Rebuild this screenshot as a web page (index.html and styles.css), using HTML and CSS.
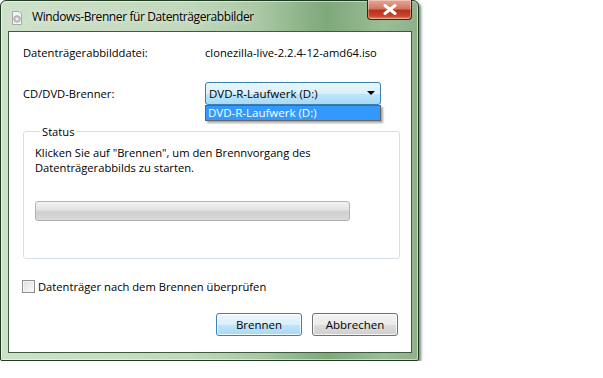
FILE: index.html
```html
<!DOCTYPE html>
<html>
<head>
  <title>Windows-Brenner</title>
  <meta charset="utf-8">
  <link rel="stylesheet" href="styles.css">
</head>
<body>
  <div class="window">
    <div class="titlebar">
      <svg class="app-icon" width="12" height="14" viewBox="0 0 12 14">
        <path d="M1.5 0.5 H8 L10.5 3 V13.5 H1.5 Z" fill="#f4f4f4" stroke="#a8a8a8"/>
        <circle cx="6" cy="8" r="3.3" fill="#c9c9c9" stroke="#9a9a9a" stroke-width="0.8"/>
        <circle cx="6" cy="8" r="1" fill="#fff"/>
      </svg>
      <span class="title">Windows-Brenner für Datenträgerabbilder</span>
      <a href="#" class="close">
        <svg width="14" height="11" viewBox="0 0 14 11"><path d="M2 1.5 L12 9.5 M12 1.5 L2 9.5" stroke="#fff" stroke-width="3" stroke-linecap="round"/></svg>
      </a>
    </div>
    <div class="client">
      <div class="row">
        <span class="label">Datenträgerabbilddatei:</span>
        <span class="value">clonezilla-live-2.2.4-12-amd64.iso</span>
      </div>
      <div class="row row-combo">
        <span class="label">CD/DVD-Brenner:</span>
        <div class="combo-wrap">
          <div class="combo">
            <span>DVD-R-Laufwerk (D:)</span>
            <span class="arrow"></span>
          </div>
          <div class="droplist">
            <div class="item">DVD-R-Laufwerk (D:)</div>
          </div>
        </div>
      </div>
      <fieldset class="group">
        <legend>Status</legend>
        <p>Klicken Sie auf "Brennen", um den Brennvorgang des<br>Datenträgerabbilds zu starten.</p>
        <div class="progress"></div>
      </fieldset>
      <label class="check"><span class="box"></span>Datenträger nach dem Brennen überprüfen</label>
      <div class="buttons">
        <a href="#" class="btn default">Brennen</a>
        <a href="#" class="btn">Abbrechen</a>
      </div>
    </div>
  </div>
</body>
</html>
```
FILE: styles.css
```css
*{
  padding:0;
  margin:0;
  box-sizing:border-box;
}
body{
  background:#fff;
  font-family:"Open Sans","Noto Sans",sans-serif;
  font-size:11.2px;
  color:#000;
}
a{
  text-decoration:none;
  color:#000;
}
.window{
  width:419px;
  height:361px;
  border:1px solid #1e3a20;
  border-radius:6px 6px 2px 2px;
  background:linear-gradient(to right,#cfe1ca 0%,#c1d8bb 45%,#a9c8a4 62%,#7ea87a 78%,#9bbd96 92%,#8fb08b 100%);
  box-shadow:inset 0 0 0 1px rgba(255,255,255,0.5),2px 2px 3px rgba(0,0,0,0.5);
  display:flex;
  flex-direction:column;
  padding:0 6px 7px 7px;
}
.titlebar{
  height:30px;
  display:flex;
  align-items:flex-start;
  position:relative;
}
.app-icon{
  margin:10px 9px 0 3px;
}
.title{
  margin-top:7px;
  font-size:12px;
  letter-spacing:-0.4px;
  color:#000;
  text-shadow:0 0 6px #fff;
}
.close{
  position:absolute;
  top:-1px;
  right:0;
  width:45px;
  height:20px;
  border:1px solid #4a1a12;
  border-top:none;
  border-radius:0 0 4px 4px;
  background:linear-gradient(#e6a696 0%,#d47763 45%,#b8321c 55%,#c9472d 85%,#e28d6e 100%);
  box-shadow:inset 0 0 0 1px rgba(255,255,255,0.35);
  display:flex;
  align-items:center;
  justify-content:center;
}
.client{
  flex:1;
  background:#fff;
  border:1px solid #3d5a3e;
  padding:9px 13px 0 14px;
  display:flex;
  flex-direction:column;
}
.row{
  display:flex;
  align-items:center;
  height:22px;
}
.label{
  width:182px;
}
.row-combo{
  margin-top:19px;
}
.combo-wrap{
  position:relative;
}
.combo{
  width:176px;
  height:23px;
  border:1px solid #3c7fb1;
  border-radius:3px;
  background:linear-gradient(#eaf6fd 0%,#d9f0fc 50%,#bee6fd 51%,#a7d9f5 100%);
  display:flex;
  align-items:center;
  justify-content:space-between;
  padding:0 5px 0 3px;
  font-size:11.5px;
}
.arrow{
  width:0;
  height:0;
  border-left:4px solid transparent;
  border-right:4px solid transparent;
  border-top:4px solid #000;
}
.droplist{
  position:absolute;
  top:23px;
  left:0;
  width:176px;
  border:1px solid #646464;
  background:#fff;
  box-shadow:2px 2px 2px rgba(0,0,0,0.35);
}
.item{
  background:#3399ff;
  color:#fff;
  height:14px;
  line-height:14px;
  padding-left:2px;
  font-size:11.5px;
}
.group{
  margin-top:21px;
  width:377px;
  height:134px;
  border:1px solid #d5dfe5;
  border-radius:3px;
  padding:0 11px;
}
.group legend{
  padding:0 2px;
  margin-left:5px;
  line-height:13px;
}
.group p{
  line-height:15px;
  margin-top:7px;
}
.progress{
  margin-top:26px;
  width:315px;
  height:20px;
  border:1px solid #b2b2b2;
  border-radius:3px;
  background:linear-gradient(#f3f3f3 0%,#e2e2e2 45%,#cfcfcf 55%,#dadada 100%);
}
.check{
  display:flex;
  align-items:center;
  margin-top:20px;
  margin-left:-1px;
}
.box{
  width:13px;
  height:13px;
  border:1px solid #8e8f8f;
  background:linear-gradient(135deg,#dcdcdc,#fcfcfc);
  box-shadow:inset 0 0 0 1px #f4f4f4;
  margin-right:3px;
}
.buttons{
  display:flex;
  justify-content:flex-end;
  gap:10px;
  margin-top:19px;
}
.btn{
  width:86px;
  height:23px;
  border:1px solid #707070;
  border-radius:3px;
  background:linear-gradient(#f2f2f2 0%,#ebebeb 50%,#dddddd 51%,#cfcfcf 100%);
  box-shadow:inset 0 0 0 1px rgba(255,255,255,0.8);
  display:flex;
  align-items:center;
  justify-content:center;
  font-size:11.5px;
}
.btn.default{
  border-color:#3c7fb1;
  background:linear-gradient(#eaf6fd 0%,#d9f0fc 50%,#bee6fd 51%,#a7d9f5 100%);
}
```
